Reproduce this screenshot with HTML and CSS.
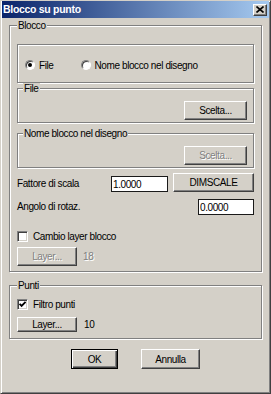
FILE: index.html
```html
<!DOCTYPE html>
<html lang="it">
<head>
    <meta charset="UTF-8">
    <meta name="viewport" content="width=device-width, initial-scale=1.0">
    <title>Blocco su punto</title>
    <link rel="stylesheet" href="styles.css">
</head>
<body>
    <div class="window">
        <div class="titlebar">
            <span class="title">Blocco su punto</span>
            <span class="close-btn">
                <svg width="8" height="7" viewBox="0 0 8 7">
                    <path d="M0.5 0.5 L7.5 6.5 M7.5 0.5 L0.5 6.5" stroke="#000" stroke-width="1.6" fill="none"/>
                </svg>
            </span>
        </div>

        <div class="dialog">
            <!-- Blocco -->
            <fieldset class="group group-main">
                <legend>Blocco</legend>

                <div class="radio-box">
                    <label class="option">
                        <span class="radio checked"></span>
                        File
                    </label>
                    <label class="option option-second">
                        <span class="radio"></span>
                        Nome blocco nel disegno
                    </label>
                </div>

                <fieldset class="group group-sub">
                    <legend>File</legend>
                    <div class="btn-row">
                        <button class="btn btn-pick">Scelta...</button>
                    </div>
                </fieldset>

                <fieldset class="group group-sub group-gap">
                    <legend>Nome blocco nel disegno</legend>
                    <div class="btn-row">
                        <button class="btn btn-pick" disabled>Scelta...</button>
                    </div>
                </fieldset>

                <div class="field-row">
                    <span class="field-label">Fattore di scala</span>
                    <input class="field-input" type="text" value="1.0000">
                    <button class="btn btn-dimscale">DIMSCALE</button>
                </div>

                <div class="field-row field-row-angle">
                    <span class="field-label">Angolo di rotaz.</span>
                    <input class="field-input" type="text" value="0.0000">
                </div>

                <label class="check-row check-row-layer">
                    <span class="checkbox"></span>
                    Cambio layer blocco
                </label>

                <div class="layer-row">
                    <button class="btn btn-layer" disabled>Layer...</button>
                    <span class="layer-count disabled-text">18</span>
                </div>
            </fieldset>

            <!-- Punti -->
            <fieldset class="group group-main group-points">
                <legend>Punti</legend>

                <label class="check-row">
                    <span class="checkbox">
                        <svg width="7" height="7" viewBox="0 0 7 7">
                            <path d="M0.6 2.8 L2.6 4.9 L6.6 0.9" stroke="#000" stroke-width="1.9" fill="none"/>
                        </svg>
                    </span>
                    Filtro punti
                </label>

                <div class="layer-row layer-row-points">
                    <button class="btn btn-layer btn-small">Layer...</button>
                    <span class="layer-count">10</span>
                </div>
            </fieldset>

            <div class="actions">
                <button class="btn btn-action btn-default">OK</button>
                <button class="btn btn-action">Annulla</button>
            </div>
        </div>
    </div>
</body>
</html>
```

FILE: styles.css
```css
/* Classic dialog */
* {
    box-sizing: border-box;
}

body {
    margin: 0;
    background-color: #d4d0c8;
    font: 10px/13px "Liberation Sans", Arial, sans-serif;
    letter-spacing: -0.4px;
    color: #000;
}

.window {
    width: 271px;
    height: 394px;
    border: 1px solid;
    border-color: #d4d0c8 #404040 #404040 #d4d0c8;
    box-shadow: inset 1px 1px #fff, inset -1px -1px #808080;
    padding: 0 1px 1px;
    display: flex;
    flex-direction: column;
}

/* Title bar */
.titlebar {
    height: 17px;
    background: linear-gradient(to right, #0a246a, #a6caf0);
    display: flex;
    align-items: center;
    justify-content: space-between;
    padding: 0 2px 0 1px;
}

.title {
    color: #fff;
    font-weight: bold;
    font-size: 10.5px;
    letter-spacing: -0.3px;
}

.close-btn {
    width: 14px;
    height: 12px;
    background-color: #d4d0c8;
    border: 1px solid;
    border-color: #fff #404040 #404040 #fff;
    box-shadow: inset -1px -1px #808080;
    display: flex;
    align-items: center;
    justify-content: center;
}

.dialog {
    flex: 1;
    padding: 0 7px;
}

/* Group boxes */
.group {
    margin: 0;
    min-width: 0;
    border: 1px solid #808080;
    box-shadow: inset 1px 1px #fff, 1px 1px #fff;
}

.group legend {
    padding: 0 1px;
    line-height: 11px;
    background-color: #d4d0c8;
}

.group-main {
    margin-top: 2px;
    padding: 13px 7px 5px;
}

.group-sub {
    padding: 7px 6px 2px 5px;
}

.group-gap {
    margin-top: 5px;
}

.group-points {
    margin-top: 8px;
    padding: 7px 7px 6px;
}

/* Radio box */
.radio-box {
    height: 39px;
    border: 1px solid #808080;
    box-shadow: inset 1px 1px #fff, 1px 1px #fff;
    display: flex;
    align-items: center;
    padding: 3px 0 0 7px;
}

.option {
    display: flex;
    align-items: center;
    gap: 4px;
}

.option-second {
    margin-left: 27px;
}

.radio {
    width: 10px;
    height: 10px;
    border-radius: 50%;
    background-color: #fff;
    border: 1px solid;
    border-color: #808080 #fff #fff #808080;
    box-shadow: inset 1px 1px #404040;
    display: flex;
    align-items: center;
    justify-content: center;
}

.radio.checked::after {
    content: "";
    width: 4px;
    height: 4px;
    border-radius: 50%;
    background-color: #000;
}

/* Buttons */
.btn {
    height: 19px;
    padding: 0;
    background-color: #d4d0c8;
    border: 1px solid;
    border-color: #fff #404040 #404040 #fff;
    box-shadow: inset -1px -1px #808080;
    font: inherit;
    letter-spacing: inherit;
    color: #000;
}

.btn:disabled {
    color: #808080;
    text-shadow: 1px 1px #fff;
}

.btn-row {
    display: flex;
    justify-content: flex-end;
}

.btn-pick {
    width: 63px;
}

.btn-dimscale {
    width: 81px;
}

.btn-layer {
    width: 60px;
}

.btn-small {
    height: 15px;
}

/* Fields */
.field-row {
    display: flex;
    align-items: flex-end;
    margin-top: 5px;
}

.field-row-angle {
    justify-content: space-between;
    margin-top: 7px;
}

.field-label {
    width: 94px;
    line-height: 16px;
}

.field-input {
    width: 57px;
    height: 16px;
    margin-right: 5px;
    padding: 0 1px;
    border: 1px solid #1a1a1a;
    background-color: #fff;
    font: inherit;
    letter-spacing: inherit;
    color: #000;
}

.field-row-angle .field-input {
    width: 56px;
    margin-right: 0;
}

/* Checkboxes */
.check-row {
    display: flex;
    align-items: center;
    gap: 5px;
    height: 13px;
}

.check-row-layer {
    margin-top: 15px;
}

.checkbox {
    width: 11px;
    height: 11px;
    background-color: #fff;
    border: 1px solid;
    border-color: #808080 #fff #fff #808080;
    box-shadow: inset 1px 1px #404040, inset -1px -1px #d4d0c8;
    display: flex;
    align-items: center;
    justify-content: center;
}

.layer-row {
    display: flex;
    align-items: center;
    gap: 6px;
    margin-top: 4px;
}

.layer-row-points {
    margin-top: 6px;
    gap: 7px;
}

.disabled-text {
    color: #808080;
    text-shadow: 1px 1px #fff;
}

/* OK / Annulla */
.actions {
    display: flex;
    justify-content: center;
    gap: 23px;
    margin-top: 10px;
}

.btn-action {
    height: 20px;
}

.btn-default {
    width: 47px;
    border-color: #000;
    box-shadow: inset 1px 1px #fff, inset -1px -1px #404040, inset -2px -2px #808080;
}

.btn-action:not(.btn-default) {
    width: 59px;
}
```
